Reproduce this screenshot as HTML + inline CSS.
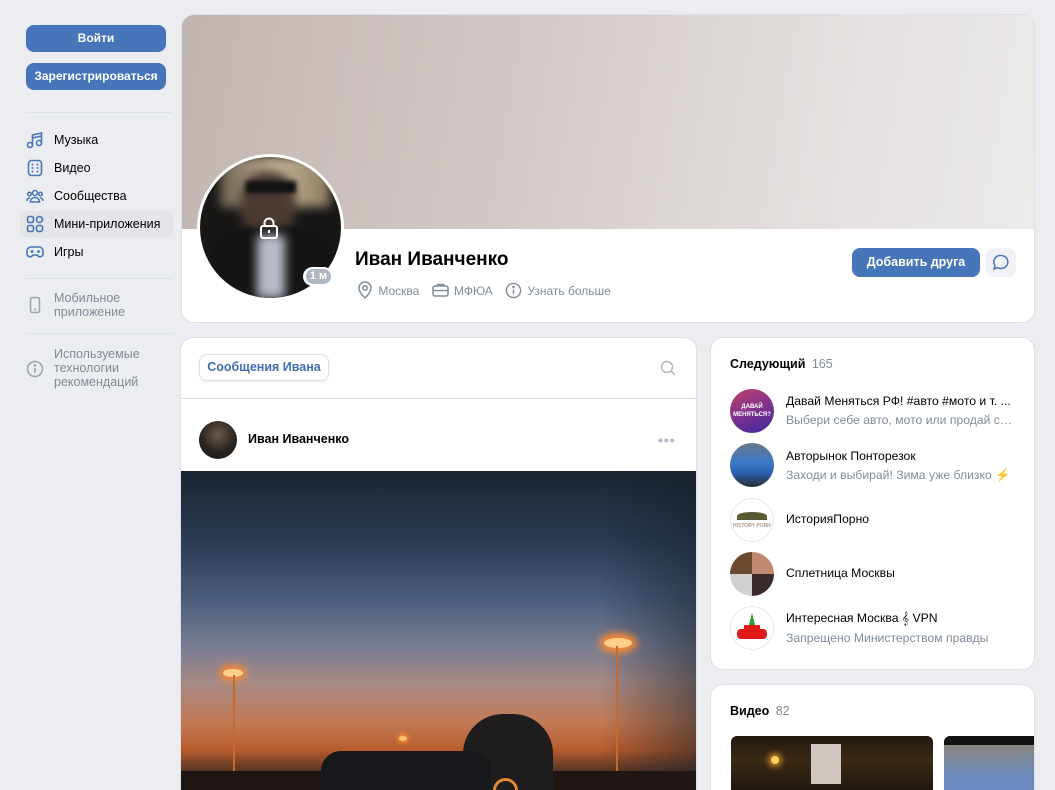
<!DOCTYPE html>
<html><head><meta charset="utf-8"><style>
*{box-sizing:border-box;margin:0;padding:0}
html,body{width:1055px;height:790px;overflow:hidden}
body{background:#ebedf0;font-family:"Liberation Sans","Noto Sans CJK SC",sans-serif;font-size:13px;color:#000;position:relative}
.abs{position:absolute}
.btn{position:absolute;left:26px;width:140px;height:27px;background:#4775b9;border-radius:8px;color:#fff;font-weight:bold;font-size:12px;text-align:center;line-height:27px;white-space:nowrap}
.hr{position:absolute;left:26px;width:146px;height:1px;background:#dce1e6}
.mi{position:absolute;left:26px;height:20px;line-height:20px;font-size:12.5px;color:#000}
.mi svg{position:absolute;left:0;top:1px}
.mi span{position:absolute;left:28px;white-space:nowrap}
.card{position:absolute;background:#fff;border-radius:12px;box-shadow:0 0 0 1px #dce1e6}
.grey{color:#818c99}
.gi{position:absolute;left:730px;width:44px;height:44px;border-radius:50%;overflow:hidden}
.gt{position:absolute;left:786px;font-size:12.2px;white-space:nowrap;max-width:230px;overflow:hidden;text-overflow:ellipsis}
</style></head><body>
<div class="btn" style="top:25px">Войти</div>
<div class="btn" style="top:63px">Зарегистрироваться</div>
<div class="hr" style="top:112px"></div>
<div class="abs" style="left:20px;top:211px;width:154px;height:27px;background:#e3e5e9;border-radius:7px"></div>
<div class="mi" style="top:130px"><svg width="18" height="18" viewBox="0 0 18 18" fill="none" stroke="#4775b9" stroke-width="1.6"><circle cx="4" cy="14" r="2.5"/><circle cx="13" cy="12" r="2.5"/><path d="M6.5 14V4l9-2v10M6.5 7l9-2"/></svg><span>Музыка</span></div>
<div class="mi" style="top:158px"><svg width="18" height="18" viewBox="0 0 18 18" fill="none" stroke="#4775b9" stroke-width="1.6"><rect x="2.5" y="1.5" width="13" height="15" rx="3"/><g fill="#4775b9" stroke="none"><circle cx="6.5" cy="5.5" r="1"/><circle cx="11.5" cy="5.5" r="1"/><circle cx="6.5" cy="9" r="1"/><circle cx="11.5" cy="9" r="1"/><circle cx="6.5" cy="12.5" r="1"/><circle cx="11.5" cy="12.5" r="1"/></g></svg><span>Видео</span></div>
<div class="mi" style="top:186px"><svg width="18" height="18" viewBox="0 0 18 18" fill="none" stroke="#4775b9" stroke-width="1.5"><circle cx="9" cy="6" r="2.5"/><circle cx="3.5" cy="7" r="1.8"/><circle cx="14.5" cy="7" r="1.8"/><path d="M4.5 15c0-3 2-4.5 4.5-4.5s4.5 1.5 4.5 4.5zM1 14c0-2 1-3 3-3M17 14c0-2-1-3-3-3"/></svg><span>Сообщества</span></div>
<div class="mi" style="top:214px"><svg width="18" height="18" viewBox="0 0 18 18" fill="none" stroke="#4775b9" stroke-width="1.6"><rect x="1.5" y="1.5" width="6" height="6" rx="2"/><circle cx="13.5" cy="4.5" r="3"/><rect x="1.5" y="10.5" width="6" height="6" rx="2"/><rect x="10.5" y="10.5" width="6" height="6" rx="2"/></svg><span>Мини-приложения</span></div>
<div class="mi" style="top:242px"><svg width="18" height="18" viewBox="0 0 18 18" fill="none" stroke="#4775b9" stroke-width="1.6"><path d="M5 4h8a4 4 0 0 1 4 4v3a3 3 0 0 1-5 2l-1-1H7l-1 1a3 3 0 0 1-5-2V8a4 4 0 0 1 4-4zM4.5 8.5h3M6 7v3"/><circle cx="12.5" cy="8.5" r=".6" fill="#4775b9"/></svg><span>Игры</span></div>
<div class="hr" style="top:278px"></div>
<div class="mi grey" style="top:291px;line-height:14px;height:30px"><svg width="18" height="18" viewBox="0 0 18 18" fill="none" stroke="#99a2ad" stroke-width="1.5" style="top:5px"><rect x="4.5" y="1.5" width="9" height="15" rx="2"/><path d="M8 13.5h2"/></svg><span style="color:#818c99">Мобильное<br>приложение</span></div>
<div class="hr" style="top:333px"></div>
<div class="mi" style="top:347px;line-height:14px;height:44px"><svg width="18" height="18" viewBox="0 0 18 18" fill="none" stroke="#99a2ad" stroke-width="1.5" style="top:13px"><circle cx="9" cy="9" r="7.5"/><path d="M9 8v5"/><circle cx="9" cy="5.3" r=".6" fill="#99a2ad"/></svg><span style="color:#818c99">Используемые<br>технологии<br>рекомендаций</span></div>

<div class="card" style="left:182px;top:15px;width:852px;height:307px;overflow:hidden">
 <div class="abs" style="left:0;top:0;width:852px;height:214px;background:linear-gradient(100deg,#c2b5b1 0%,#d3cac7 40%,#e4e0df 75%,#eceaea 100%)"></div>
 <div class="abs" style="left:173px;top:234px;font-size:19px;font-weight:bold">Иван Иванченко</div>
 <div class="abs grey" style="left:175px;top:266px;font-size:12px;white-space:nowrap">
  <svg width="16" height="18" viewBox="0 0 16 18" fill="none" stroke="#818c99" stroke-width="1.5" style="vertical-align:-4px"><path d="M8 17s6-5.5 6-10A6 6 0 0 0 2 7c0 4.5 6 10 6 10z"/><circle cx="8" cy="7" r="2.2"/></svg>
  <span style="margin-left:2px">Москва</span>
  <svg width="17" height="16" viewBox="0 0 17 16" fill="none" stroke="#818c99" stroke-width="1.5" style="vertical-align:-3px;margin-left:9px"><rect x="1" y="4" width="15" height="10" rx="2"/><path d="M5.5 4V2.5h6V4M1 8.5h15"/></svg>
  <span style="margin-left:2px">МФЮА</span>
  <svg width="17" height="17" viewBox="0 0 18 18" fill="none" stroke="#818c99" stroke-width="1.5" style="vertical-align:-4px;margin-left:9px"><circle cx="9" cy="9" r="7.5"/><path d="M9 8v5"/><circle cx="9" cy="5.3" r=".6" fill="#818c99"/></svg>
  <span style="margin-left:2px">Узнать больше</span>
 </div>
 <div class="abs" style="left:670px;top:233px;width:128px;height:29px;background:#4775b9;border-radius:8px;color:#fff;font-weight:bold;font-size:12.5px;text-align:center;line-height:29px">Добавить друга</div>
 <div class="abs" style="left:804px;top:233px;width:30px;height:29px;background:#f0f2f5;border-radius:8px"><svg width="30" height="29" viewBox="0 0 30 29" fill="none" stroke="#4775b9" stroke-width="1.5"><path d="M15 7.5a7 6.5 0 1 1-3.5 12.2L8 21l1-3.3A6.5 6.5 0 0 1 15 7.5z"/></svg></div>
</div>
<div class="abs" style="left:197px;top:154px;width:147px;height:147px;border-radius:50%;background:#fff"></div>
<div class="abs" style="left:200px;top:157px;width:141px;height:141px;border-radius:50%;overflow:hidden;background:#181716">
 <div class="abs" style="left:20px;top:0;width:110px;height:50px;background:linear-gradient(90deg,#6a6050,#c9b99c,#8a7a60);filter:blur(5px)"></div>
 <div class="abs" style="left:40px;top:14px;width:56px;height:66px;border-radius:45%;background:#4a3a32;filter:blur(5px)"></div>
 <div class="abs" style="left:46px;top:24px;width:50px;height:12px;background:#111;filter:blur(2px)"></div>
 <div class="abs" style="left:10px;top:70px;width:125px;height:80px;background:#141414;border-radius:40% 40% 0 0;filter:blur(3px)"></div>
 <div class="abs" style="left:57px;top:78px;width:28px;height:63px;background:#b7bcc6;filter:blur(5px)"></div>
</div>
<svg class="abs" style="left:259px;top:216px" width="20" height="24" viewBox="0 0 20 24" fill="none" stroke="#fff" stroke-width="2"><path d="M5.5 10V7a4.5 4.5 0 0 1 9 0v3"/><rect x="2" y="10" width="16" height="12" rx="2"/><path d="M10 14v3"/></svg>
<div class="abs" style="left:303px;top:267px;width:30px;height:19px;border-radius:10px;background:#fff"></div>
<div class="abs" style="left:306px;top:269px;width:25px;height:15px;border-radius:8px;background:#aeb7c2;color:#fff;font-size:11px;font-weight:bold;text-align:center;line-height:15px">1 м</div>

<div class="card" style="left:181px;top:338px;width:515px;height:470px;overflow:hidden">
 <div class="abs" style="left:18px;top:16px;width:130px;height:27px;border:1px solid #dce1e6;border-radius:8px;box-shadow:0 1px 2px rgba(0,0,0,.08);color:#3f6fae;font-weight:bold;font-size:12.5px;text-align:center;line-height:25px">Сообщения Ивана</div>
 <svg class="abs" style="left:479px;top:22px" width="16" height="16" viewBox="0 0 16 16" fill="none" stroke="#aeb7c2" stroke-width="1.5"><circle cx="7" cy="7" r="5.5"/><path d="M11 11l4 4"/></svg>
 <div class="abs" style="left:0;top:60px;width:515px;height:1px;background:#dce1e6"></div>
 <div class="abs" style="left:18px;top:83px;width:38px;height:38px;border-radius:50%;background:radial-gradient(circle at 50% 35%,#6a5a4e,#2a2420 55%,#1a1816)"></div>
 <div class="abs" style="left:67px;top:94px;font-weight:bold;font-size:12.5px">Иван Иванченко</div>
 <div class="abs" style="left:477px;top:94px;color:#aeb7c2;font-size:14px;letter-spacing:1px;font-weight:bold">•••</div>
 <div class="abs" style="left:0;top:133px;width:515px;height:340px;background:linear-gradient(180deg,#1c2430 0%,#2b3a52 20%,#4c5d7c 38%,#7a7d92 52%,#a58a86 62%,#c27a55 74%,#b85c2e 82%,#3a2a20 90%,#1a1412 100%)">
  <div class="abs" style="left:420px;top:0;width:95px;height:300px;background:linear-gradient(90deg,transparent,rgba(20,30,40,.5))"></div>
  <div class="abs" style="left:42px;top:198px;width:20px;height:8px;border-radius:50%;background:#ffd08a;box-shadow:0 0 8px 4px #ff8a30"></div>
  <div class="abs" style="left:52px;top:204px;width:2px;height:100px;background:#c5692e"></div>
  <div class="abs" style="left:423px;top:167px;width:28px;height:10px;border-radius:50%;background:#ffd08a;box-shadow:0 0 8px 5px #ff8a30"></div>
  <div class="abs" style="left:435px;top:175px;width:2px;height:140px;background:#c5692e"></div>
  <div class="abs" style="left:218px;top:265px;width:8px;height:5px;border-radius:50%;background:#ffc070;box-shadow:0 0 4px 2px #ff8a30"></div>
  <div class="abs" style="left:0;top:300px;width:515px;height:40px;background:#1e1612"></div>
  <div class="abs" style="left:282px;top:243px;width:90px;height:100px;border-radius:40px 40px 0 0;background:#1e1c1c"></div>
  <div class="abs" style="left:140px;top:280px;width:170px;height:60px;border-radius:20px 20px 0 0;background:#16181c"></div>
  <div class="abs" style="left:312px;top:307px;width:25px;height:25px;border-radius:50%;border:3px solid #e08a30"></div>
 </div>
</div>

<div class="card" style="left:711px;top:338px;width:323px;height:331px"></div>
<div class="abs" style="left:730px;top:357px;font-weight:bold;font-size:12.5px">Следующий <span style="color:#818c99;font-weight:normal;margin-left:3px">165</span></div>
<div class="gi" style="top:389px;background:linear-gradient(160deg,#c0406a,#7a3090 55%,#3a2a9a);color:#fff;font-size:6px;font-weight:bold;text-align:center;line-height:8px;padding-top:14px">ДАВАЙ<br>МЕНЯТЬСЯ?</div>
<div class="gt" style="top:394px">Давай Меняться РФ! #авто #мото и т. ...</div>
<div class="gt grey" style="top:413px">Выбери себе авто, мото или продай св...</div>
<div class="gi" style="top:443px;background:linear-gradient(180deg,#6a7a8a 0%,#3a78c8 45%,#2a5ea8 70%,#2a2a30 100%)"></div>
<div class="gt" style="top:449px">Авторынок Понторезок</div>
<div class="gt grey" style="top:468px">Заходи и выбирай! Зима уже близко <span style="color:#f07a20">⚡</span></div>
<div class="gi" style="top:498px;background:#fff;border:1px solid #e7e8ec"><div class="abs" style="left:6px;top:13px;width:30px;height:8px;background:#5a5a30;border-radius:50% 50% 0 0"></div><div class="abs" style="left:2px;top:24px;font-size:5px;color:#8a6a50;white-space:nowrap">HISTORY PORN</div></div>
<div class="gt" style="top:512px">ИсторияПорно</div>
<div class="gi" style="top:552px;background:conic-gradient(#c08a70 0 25%,#3a2a2a 0 50%,#d0d0d0 0 75%,#6a4a30 0)"></div>
<div class="gt" style="top:566px">Сплетница Москвы</div>
<div class="gi" style="top:606px;background:#fff;border:1px solid #e7e8ec"><div class="abs" style="left:17px;top:6px;width:8px;height:16px;background:#2a9a3a;clip-path:polygon(50% 0,100% 100%,0 100%)"></div><div class="abs" style="left:6px;top:22px;width:30px;height:10px;background:#e01818;border-radius:4px"></div><div class="abs" style="left:13px;top:18px;width:16px;height:8px;background:#e01818"></div></div>
<div class="gt" style="top:611px">Интересная Москва 𝄞 VPN</div>
<div class="gt grey" style="top:631px">Запрещено Министерством правды</div>

<div class="card" style="left:711px;top:685px;width:323px;height:130px;overflow:hidden">
 <div class="abs" style="left:19px;top:19px;font-weight:bold;font-size:12.5px">Видео <span style="color:#818c99;font-weight:normal;margin-left:3px">82</span></div>
 <div class="abs" style="left:20px;top:51px;width:202px;height:60px;border-radius:6px;background:linear-gradient(180deg,#201810,#3a2a14 40%,#1a1410);overflow:hidden"><div class="abs" style="left:80px;top:8px;width:30px;height:40px;background:#d0c8c0"></div><div class="abs" style="left:40px;top:20px;width:8px;height:8px;border-radius:50%;background:#ffcc66;box-shadow:0 0 6px 3px #c08020"></div></div>
 <div class="abs" style="left:233px;top:51px;width:100px;height:60px;border-radius:6px;background:linear-gradient(180deg,#111 0 15%,#8a8680 15%,#6a8ac0 70%)"></div>
</div>
</body></html>
